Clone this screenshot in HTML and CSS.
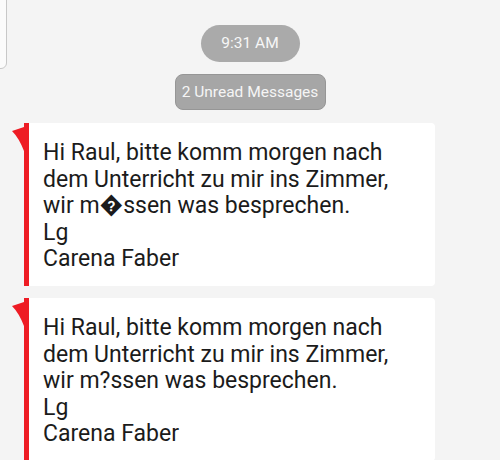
FILE: index.html
```html
<!DOCTYPE html>
<html lang="de">
<head>
    <meta charset="UTF-8">
    <meta name="viewport" content="width=device-width, initial-scale=1.0">
    <title>Chat</title>
    <link rel="stylesheet" href="styles.css">
</head>
<body>
    <div class="prev-card"></div>

    <div class="thread">
        <div class="time-pill">9:31 AM</div>
        <div class="unread-pill">2 Unread Messages</div>

        <div class="msg">
            <svg class="tail" width="12" height="24" viewBox="0 0 12 24">
                <path d="M0 4 L12 0 L12 24 Q7 11 0 4 Z" fill="#ee1c24"/>
            </svg>
            <p>Hi Raul, bitte komm morgen nach<br>dem Unterricht zu mir ins Zimmer,<br>wir m&#xFFFD;ssen was besprechen.<br>Lg<br>Carena Faber</p>
        </div>

        <div class="msg">
            <svg class="tail" width="12" height="24" viewBox="0 0 12 24">
                <path d="M0 4 L12 0 L12 24 Q7 11 0 4 Z" fill="#ee1c24"/>
            </svg>
            <p>Hi Raul, bitte komm morgen nach<br>dem Unterricht zu mir ins Zimmer,<br>wir m?ssen was besprechen.<br>Lg<br>Carena Faber</p>
        </div>
    </div>
</body>
</html>
```

FILE: styles.css
```css
body {
    font-family: Roboto, "Noto Sans", sans-serif;
    background-color: #f4f4f4;
    margin: 0;
    padding: 0;
    height: 460px;
    overflow: hidden;
}

/* bottom corner of the card above, cut off by the screen */
.prev-card {
    position: absolute;
    top: -10px;
    left: -10px;
    width: 15px;
    height: 77px;
    background-color: #fbfbfb;
    border: 1px solid #c8c8c8;
    border-radius: 0 0 6px 0;
}

.thread {
    display: flex;
    flex-direction: column;
    align-items: center;
    padding-top: 25px;
}

.time-pill {
    background-color: #aaaaaa;
    color: #f7f7f7;
    font-size: 15.5px;
    height: 37px;
    line-height: 37px;
    width: 99px;
    text-align: center;
    border-radius: 19px;
}

.unread-pill {
    margin-top: 12px;
    background-color: #a6a6a6;
    color: #f5f5f5;
    font-size: 15.5px;
    height: 34px;
    line-height: 34px;
    width: 149px;
    text-align: center;
    border: 1px solid #969696;
    border-radius: 8px;
}

.msg {
    position: relative;
    align-self: flex-start;
    margin-left: 24px;
    margin-top: 13px;
    width: 392px;
    background-color: #fff;
    border-left: 5px solid #ee1c24;
    border-radius: 0 4px 4px 0;
    padding: 17px 0 13px 14px;
}

.msg + .msg {
    margin-top: 12px;
}

.msg .tail {
    position: absolute;
    left: -17px;
    top: 4px;
}

.msg p {
    margin: 0;
    font-size: 23px;
    line-height: 26.6px;
    color: #1b1b1b;
}
```
